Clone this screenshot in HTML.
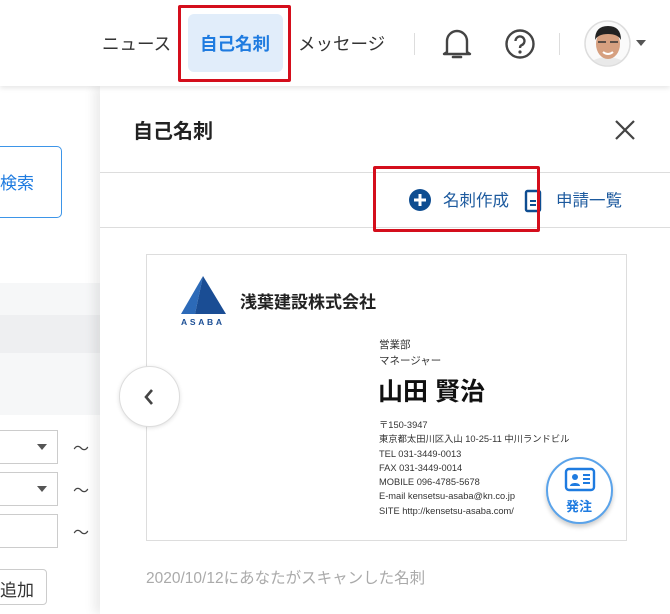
<!DOCTYPE html>
<html><head><meta charset="utf-8"><style>
*{margin:0;padding:0;box-sizing:border-box}
body{width:670px;height:614px;overflow:hidden;background:#fff;font-family:"Liberation Sans","Noto Sans CJK JP",sans-serif;position:relative;color:#333}
.a{position:absolute;white-space:nowrap}
</style></head><body>
<div class="a" style="left:0;top:86px;width:110px;height:528px;background:#fff"></div>
<div class="a" style="left:0;top:283px;width:110px;height:32px;background:#f6f7f8"></div>
<div class="a" style="left:0;top:315px;width:110px;height:38px;background:#eeeff1"></div>
<div class="a" style="left:0;top:353px;width:110px;height:62px;background:#f6f7f8"></div>
<div class="a" style="left:-10px;top:146px;width:72px;height:72px;border:1.5px solid #3d95e8;border-radius:5px"></div>
<div class="a" style="left:0;top:169px;font-size:17px;color:#1e7be0">検索</div>
<div class="a" style="left:-5px;top:430px;width:63px;height:34px;border:1px solid #ccc;background:#fff"></div>
<div class="a" style="left:-5px;top:472px;width:63px;height:34px;border:1px solid #ccc;background:#fff"></div>
<div class="a" style="left:-5px;top:514px;width:63px;height:34px;border:1px solid #ccc;background:#fff"></div>
<div class="a" style="left:37px;top:444px;border:5px solid transparent;border-top:6px solid #555"></div>
<div class="a" style="left:37px;top:486px;border:5px solid transparent;border-top:6px solid #555"></div>
<div class="a" style="left:73px;top:435px;font-size:16px;color:#444">〜</div>
<div class="a" style="left:73px;top:477px;font-size:16px;color:#444">〜</div>
<div class="a" style="left:73px;top:519px;font-size:16px;color:#444">〜</div>
<div class="a" style="left:-10px;top:569px;width:57px;height:36px;border:1px solid #ccc;border-radius:4px;background:#fff"></div>
<div class="a" style="left:0;top:576px;font-size:17px;color:#333">追加</div>
<div class="a" style="left:100px;top:86px;width:570px;height:528px;background:#fff;box-shadow:-6px 0 10px rgba(0,0,0,0.08)"></div>
<div class="a" style="left:133px;top:115px;font-size:20px;font-weight:bold;color:#222">自己名刺</div>
<svg class="a" style="left:614px;top:119px" width="22" height="22"><path d="M2 2L20 20M20 2L2 20" stroke="#444" stroke-width="2.2"/></svg>
<div class="a" style="left:100px;top:172px;width:570px;height:1px;background:#ddd"></div>
<div class="a" style="left:100px;top:227px;width:570px;height:1px;background:#ddd"></div>
<svg class="a" style="left:408px;top:188px" width="24" height="24"><circle cx="12" cy="12" r="11" fill="#0e4d91"/><path d="M12 6v12M6 12h12" stroke="#fff" stroke-width="3"/></svg>
<div class="a" style="left:443px;top:187px;font-size:16.5px;color:#1d5a9e">名刺作成</div>
<svg class="a" style="left:524px;top:189px" width="18" height="24"><rect x="2" y="2" width="14" height="20" rx="1.5" fill="none" stroke="#0e4d91" stroke-width="2.4"/><path d="M6 12h6M6 16h6" stroke="#0e4d91" stroke-width="2"/></svg>
<div class="a" style="left:556px;top:187px;font-size:16.5px;color:#1d5a9e">申請一覧</div>
<div class="a" style="left:373px;top:166px;width:167px;height:66px;border:3px solid #d40e1c;border-radius:2px"></div>
<div class="a" style="left:146px;top:254px;width:481px;height:287px;border:1px solid #ddd;background:#fff"></div>
<svg class="a" style="left:181px;top:276px" width="46" height="50"><polygon points="22,0 0,38 14,38" fill="#2c6ab8"/><polygon points="22,0 14,38 45,38" fill="#1a4d94"/><text x="0" y="49" font-size="8.5" font-weight="bold" fill="#1a4d94" font-family="Liberation Sans" letter-spacing="2.7">ASABA</text></svg>
<div class="a" style="left:240px;top:288px;font-size:17px;font-weight:bold;color:#222">浅葉建設株式会社</div>
<div class="a" style="left:379px;top:337px;font-size:10.5px;color:#333">営業部</div>
<div class="a" style="left:379px;top:353px;font-size:10.5px;color:#333">マネージャー</div>
<div class="a" style="left:378px;top:372px;font-size:25px;font-weight:bold;color:#111">山田 賢治</div>
<div class="a" style="left:379px;top:418px;font-size:9.3px;line-height:14.3px;color:#333">〒150-3947<br>東京都太田川区入山 10-25-11 中川ランドビル<br>TEL 031-3449-0013<br>FAX 031-3449-0014<br>MOBILE 096-4785-5678<br>E-mail kensetsu-asaba@kn.co.jp<br>SITE http://kensetsu-asaba.com/</div>
<div class="a" style="left:546px;top:457px;width:67px;height:67px;border-radius:50%;background:#fff;border:2px solid #5aa3ea;box-shadow:0 3px 5px rgba(0,0,0,0.2)"></div>
<svg class="a" style="left:564px;top:467px" width="32" height="26"><rect x="2" y="2" width="28" height="21" rx="3" fill="none" stroke="#1e7be0" stroke-width="2.4"/><circle cx="11" cy="10" r="3" fill="#1e7be0"/><path d="M6 19c0-4 10-4 10 0z" fill="#1e7be0"/><path d="M19 8h7M19 12h7M19 16h7" stroke="#1e7be0" stroke-width="2"/></svg>
<div class="a" style="left:566px;top:496px;font-size:13px;font-weight:bold;color:#1e7be0">発注</div>
<div class="a" style="left:119px;top:366px;width:61px;height:61px;border-radius:50%;background:#fff;border:1px solid #ddd;box-shadow:0 1px 4px rgba(0,0,0,0.12)"></div>
<svg class="a" style="left:142px;top:387px" width="14" height="20"><path d="M10 3L4 10L10 17" fill="none" stroke="#444" stroke-width="2.6"/></svg>
<div class="a" style="left:146px;top:566px;font-size:15.5px;color:#aaa">2020/10/12にあなたがスキャンした名刺</div>
<div class="a" style="left:0;top:0;width:670px;height:86px;background:#fff;box-shadow:0 2px 5px rgba(0,0,0,0.1)"></div>
<div class="a" style="left:102px;top:31px;font-size:17.5px;color:#333">ニュース</div>
<div class="a" style="left:188px;top:14px;width:95px;height:58px;background:#e1edfa;border-radius:6px"></div>
<div class="a" style="left:200px;top:31px;font-size:17.5px;font-weight:bold;color:#1e7be0">自己名刺</div>
<div class="a" style="left:178px;top:5px;width:113px;height:77px;border:3px solid #d40e1c;border-radius:2px"></div>
<div class="a" style="left:298px;top:31px;font-size:17.5px;color:#333">メッセージ</div>
<div class="a" style="left:414px;top:33px;width:1px;height:22px;background:#ddd"></div>
<svg class="a" style="left:442px;top:26px" width="30" height="34"><path d="M5 26V15a10 10 0 0 1 20 0v11l3 2H2z" fill="none" stroke="#444" stroke-width="2.4" stroke-linejoin="round"/><path d="M11 31h8" stroke="#444" stroke-width="2.6" stroke-linecap="round"/></svg>
<svg class="a" style="left:504px;top:28px" width="32" height="32"><circle cx="16" cy="16" r="13.5" fill="none" stroke="#444" stroke-width="2.4"/><path d="M11.5 13a4.5 4.5 0 1 1 6 4.2c-1.3.6-1.5 1.3-1.5 2.8" fill="none" stroke="#444" stroke-width="2.4"/><circle cx="16" cy="24" r="1.6" fill="#444"/></svg>
<div class="a" style="left:559px;top:33px;width:1px;height:22px;background:#ddd"></div>
<svg class="a" style="left:584px;top:20px" width="47" height="47"><defs><clipPath id="c"><circle cx="23.5" cy="23.5" r="22"/></clipPath></defs><circle cx="23.5" cy="23.5" r="22.5" fill="#fafafa" stroke="#ddd" stroke-width="1.5"/><g clip-path="url(#c)"><path d="M10 60V40q13-6 27 0v20z" fill="#e9e9e9"/><ellipse cx="24" cy="24" rx="12" ry="15" fill="#d6a080"/><path d="M11 20q0-14 13-14t13 14q-3-6-13-6t-13 6z" fill="#222"/><path d="M14 22h8M26 22h8" stroke="#333" stroke-width="1.5"/><path d="M19 32q5 4 10 0" stroke="#fff" stroke-width="2" fill="none"/></g></svg>
<div class="a" style="left:636px;top:40px;border:5px solid transparent;border-top:6px solid #555"></div>
</body></html>
